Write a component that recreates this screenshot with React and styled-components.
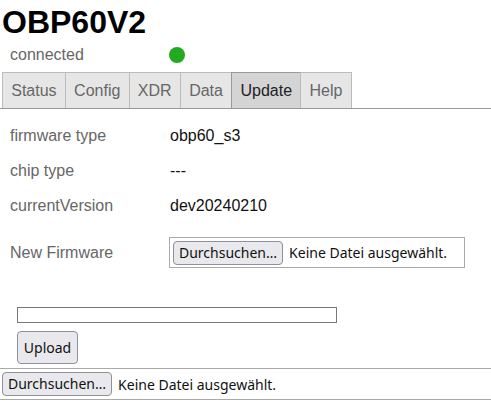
import React from 'react'
import styled, { createGlobalStyle } from 'styled-components'

const Global = createGlobalStyle`
  body {
    margin: 0;
    font-family: "Liberation Sans", Arial, sans-serif;
    background: #fff;
  }
`

const Page = styled.div`
  padding: 0 2px;
`

const Title = styled.h1`
  margin: 0;
  padding-top: 4px;
  font-size: 32px;
  font-weight: bold;
  color: #000;
  line-height: 37px;
`

const StatusLine = styled.div`
  display: flex;
  align-items: center;
  height: 28px;
  padding-left: 8px;
  color: #666;
  font-size: 16px;
`

const StatusLabel = styled.span`
  width: 159px;
`

const Dot = styled.span`
  width: 16px;
  height: 16px;
  border-radius: 50%;
  background: ${p => p.color};
`

const TabBar = styled.div`
  display: flex;
  margin: 3px -2px 0;
  padding-left: 2px;
  border-bottom: 1px solid #999;
`

const Tab = styled.div`
  padding: 9px 8.25px 8px;
  font-size: 16px;
  line-height: 18px;
  color: ${p => (p.active ? '#222' : '#666')};
  background: ${p => (p.active ? '#d4d4d4' : '#e6e6e6')};
  border: 1px solid ${p => (p.active ? '#999' : '#bbb')};
  border-bottom: none;
  margin-right: -1px;
`

const Table = styled.div`
  display: grid;
  grid-template-columns: 160px auto;
  grid-auto-rows: 35px;
  align-items: center;
  padding: 9px 0 0 8px;
  font-size: 16px;
`

const Label = styled.div`
  color: #666;
`

const Value = styled.div`
  color: #111;
`

const FirmwareRow = styled.div`
  display: grid;
  grid-template-columns: 159px auto;
  align-items: center;
  padding: 14px 0 0 8px;
  font-size: 16px;
`

const FileBox = styled.div`
  justify-self: start;
  width: 296px;
  height: 31px;
  box-sizing: border-box;
  border: 1px solid #aaa;
  display: flex;
  align-items: center;
  padding-left: 3px;
`

const FilePick = styled.div`
  display: flex;
  align-items: center;
  gap: 6px;
  font-family: "Noto Sans", "DejaVu Sans", sans-serif;
  font-size: 14px;
  color: #111;
`

const FileButton = styled.button`
  font: inherit;
  font-size: 14px;
  color: #111;
  background: #e9e9ed;
  border: 1px solid #8f8f9d;
  border-radius: 4px;
  height: 24px;
  padding: 0 5px;
  line-height: 20px;
`

const Uploader = styled.div`
  display: flex;
  flex-direction: column;
  align-items: flex-start;
  gap: 8px;
  padding: 39px 0 0 15px;
`

const Progress = styled.div`
  width: 320px;
  height: 16px;
  box-sizing: border-box;
  border: 1px solid #777;
`

const UploadButton = styled.button`
  font-family: "Noto Sans", "DejaVu Sans", sans-serif;
  font-size: 14px;
  color: #111;
  background: #e9e9ed;
  border: 1px solid #8f8f9d;
  border-radius: 4px;
  height: 33px;
  width: 61px;
  padding: 0;
`

const BottomBar = styled.div`
  margin: 4px -2px 0;
  padding: 3px 2px 3px;
  border-top: 1px solid #aaa;
  border-bottom: 1px solid #aaa;
`

const tabs = ['Status', 'Config', 'XDR', 'Data', 'Update', 'Help']

const info = [
  ['firmware type', 'obp60_s3'],
  ['chip type', '---'],
  ['currentVersion', 'dev20240210'],
]

function FileInput() {
  return (
    <FilePick>
      <FileButton>Durchsuchen…</FileButton>
      <span>Keine Datei ausgewählt.</span>
    </FilePick>
  )
}

export default function App() {
  return (
    <Page>
      <Global />
      <Title>OBP60V2</Title>
      <StatusLine>
        <StatusLabel>connected</StatusLabel>
        <Dot color="#22aa22" />
      </StatusLine>
      <TabBar>
        {tabs.map(t => (
          <Tab key={t} active={t === 'Update'}>{t}</Tab>
        ))}
      </TabBar>
      <Table>
        {info.map(([l, v]) => (
          <React.Fragment key={l}>
            <Label>{l}</Label>
            <Value>{v}</Value>
          </React.Fragment>
        ))}
      </Table>
      <FirmwareRow>
        <Label>New Firmware</Label>
        <FileBox>
          <FileInput />
        </FileBox>
      </FirmwareRow>
      <Uploader>
        <Progress />
        <UploadButton>Upload</UploadButton>
      </Uploader>
      <BottomBar>
        <FileInput />
      </BottomBar>
    </Page>
  )
}
